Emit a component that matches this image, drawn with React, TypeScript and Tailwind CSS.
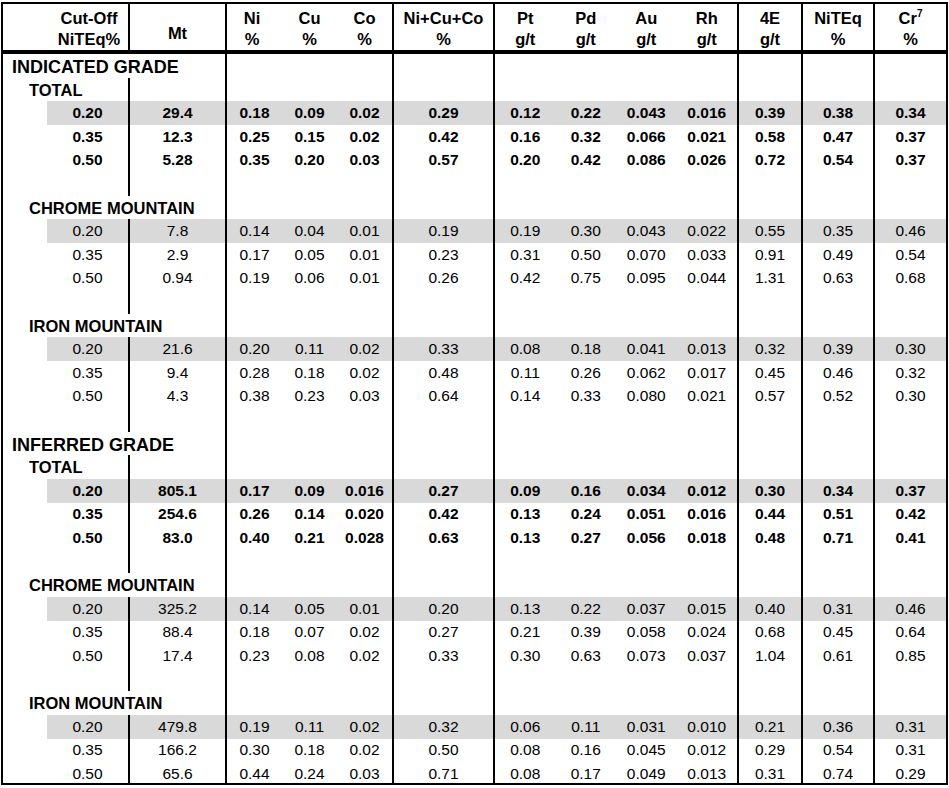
import React from "react";

const GRID =
  "grid grid-cols-[44px_81px_97px_57px_55px_55px_101px_62.5px_60.5px_60.5px_60.5px_64px_72px_73px]";

// columns (by index) that carry a vertical rule on their left edge
const RULED = new Set([2, 3, 6, 7, 11, 12, 13]);

type Row =
  | { kind: "major"; label: string }
  | { kind: "sub"; label: string; keepRule?: boolean }
  | { kind: "data"; values: string[]; bold?: boolean; shade?: boolean }
  | { kind: "blank" };

const block = (rows: string[][], bold: boolean): Row[] =>
  rows.map((r, i) => ({ kind: "data", values: r, bold, shade: i === 0 }));

const ROWS: Row[] = [
  { kind: "major", label: "INDICATED GRADE" },
  { kind: "sub", label: "TOTAL", keepRule: true },
  ...block(
    [
      ["0.20", "29.4", "0.18", "0.09", "0.02", "0.29", "0.12", "0.22", "0.043", "0.016", "0.39", "0.38", "0.34"],
      ["0.35", "12.3", "0.25", "0.15", "0.02", "0.42", "0.16", "0.32", "0.066", "0.021", "0.58", "0.47", "0.37"],
      ["0.50", "5.28", "0.35", "0.20", "0.03", "0.57", "0.20", "0.42", "0.086", "0.026", "0.72", "0.54", "0.37"],
    ],
    true,
  ),
  { kind: "blank" },
  { kind: "sub", label: "CHROME MOUNTAIN" },
  ...block(
    [
      ["0.20", "7.8", "0.14", "0.04", "0.01", "0.19", "0.19", "0.30", "0.043", "0.022", "0.55", "0.35", "0.46"],
      ["0.35", "2.9", "0.17", "0.05", "0.01", "0.23", "0.31", "0.50", "0.070", "0.033", "0.91", "0.49", "0.54"],
      ["0.50", "0.94", "0.19", "0.06", "0.01", "0.26", "0.42", "0.75", "0.095", "0.044", "1.31", "0.63", "0.68"],
    ],
    false,
  ),
  { kind: "blank" },
  { kind: "sub", label: "IRON MOUNTAIN" },
  ...block(
    [
      ["0.20", "21.6", "0.20", "0.11", "0.02", "0.33", "0.08", "0.18", "0.041", "0.013", "0.32", "0.39", "0.30"],
      ["0.35", "9.4", "0.28", "0.18", "0.02", "0.48", "0.11", "0.26", "0.062", "0.017", "0.45", "0.46", "0.32"],
      ["0.50", "4.3", "0.38", "0.23", "0.03", "0.64", "0.14", "0.33", "0.080", "0.021", "0.57", "0.52", "0.30"],
    ],
    false,
  ),
  { kind: "blank" },
  { kind: "major", label: "INFERRED GRADE" },
  { kind: "sub", label: "TOTAL", keepRule: true },
  ...block(
    [
      ["0.20", "805.1", "0.17", "0.09", "0.016", "0.27", "0.09", "0.16", "0.034", "0.012", "0.30", "0.34", "0.37"],
      ["0.35", "254.6", "0.26", "0.14", "0.020", "0.42", "0.13", "0.24", "0.051", "0.016", "0.44", "0.51", "0.42"],
      ["0.50", "83.0", "0.40", "0.21", "0.028", "0.63", "0.13", "0.27", "0.056", "0.018", "0.48", "0.71", "0.41"],
    ],
    true,
  ),
  { kind: "blank" },
  { kind: "sub", label: "CHROME MOUNTAIN" },
  ...block(
    [
      ["0.20", "325.2", "0.14", "0.05", "0.01", "0.20", "0.13", "0.22", "0.037", "0.015", "0.40", "0.31", "0.46"],
      ["0.35", "88.4", "0.18", "0.07", "0.02", "0.27", "0.21", "0.39", "0.058", "0.024", "0.68", "0.45", "0.64"],
      ["0.50", "17.4", "0.23", "0.08", "0.02", "0.33", "0.30", "0.63", "0.073", "0.037", "1.04", "0.61", "0.85"],
    ],
    false,
  ),
  { kind: "blank" },
  { kind: "sub", label: "IRON MOUNTAIN" },
  ...block(
    [
      ["0.20", "479.8", "0.19", "0.11", "0.02", "0.32", "0.06", "0.11", "0.031", "0.010", "0.21", "0.36", "0.31"],
      ["0.35", "166.2", "0.30", "0.18", "0.02", "0.50", "0.08", "0.16", "0.045", "0.012", "0.29", "0.54", "0.31"],
      ["0.50", "65.6", "0.44", "0.24", "0.03", "0.71", "0.08", "0.17", "0.049", "0.013", "0.31", "0.74", "0.29"],
    ],
    false,
  ),
];

function ruled(col: number) {
  return RULED.has(col) ? "border-l-2 border-black" : "";
}

// empty cells for columns [from..13]
function Empties({ from }: { from: number }) {
  const cells = [];
  for (let c = from; c <= 13; c++) cells.push(<div key={c} className={ruled(c)} />);
  return <>{cells}</>;
}

function BodyRow({ row, last }: { row: Row; last: boolean }) {
  const h = last ? "h-[21px]" : "h-[23.6px]";
  if (row.kind === "major") {
    return (
      <div className={`${GRID} ${h}`}>
        <div className="col-span-3 flex items-center whitespace-nowrap pl-[9px] text-[18px] font-bold">{row.label}</div>
        <Empties from={3} />
      </div>
    );
  }
  if (row.kind === "sub") {
    return (
      <div className={`${GRID} ${h}`}>
        <div className={`${row.keepRule ? "col-span-2" : "col-span-3"} flex items-center whitespace-nowrap pl-[26px] text-[16.5px] font-bold`}>
          {row.label}
        </div>
        <Empties from={row.keepRule ? 2 : 3} />
      </div>
    );
  }
  if (row.kind === "blank") {
    return (
      <div className={`${GRID} ${h}`}>
        <div />
        <Empties from={1} />
      </div>
    );
  }
  return (
    <div className={`${GRID} ${h} text-[15.5px] ${row.bold ? "font-bold" : ""}`}>
      <div />
      {row.values.map((v, i) => (
        <div key={i} className={`${ruled(i + 1)} ${row.shade ? "bg-[#d9d9d9]" : ""} flex items-center justify-center pb-[1px]`}>
          {v}
        </div>
      ))}
    </div>
  );
}

function Head({ top, bottom, className = "" }: { top: React.ReactNode; bottom: string; className?: string }) {
  return (
    <div className={`flex flex-col items-center justify-end leading-[21px] ${className}`}>
      <span>{top}</span>
      <span>{bottom}</span>
    </div>
  );
}

export default function App() {
  return (
    <div className="bg-white pl-[1px] pt-[2px] text-black [font-family:'Liberation_Sans',Arial,sans-serif]">
      <div className="w-[947px] border-2 border-black">
        <div className={`${GRID} h-[50px] border-b-4 border-black text-[16.5px] font-bold`}>
          <Head top="Cut-Off" bottom="NiTEq%" className="col-span-2 pl-[47px]" />
          <div className="flex items-end justify-center border-l-2 border-black pb-[6px] leading-[21px]">Mt</div>
          <Head top="Ni" bottom="%" className="border-l-2 border-black pr-[5px]" />
          <Head top="Cu" bottom="%" />
          <Head top="Co" bottom="%" />
          <Head top="Ni+Cu+Co" bottom="%" className="border-l-2 border-black" />
          <Head top="Pt" bottom="g/t" className="border-l-2 border-black" />
          <Head top="Pd" bottom="g/t" />
          <Head top="Au" bottom="g/t" />
          <Head top="Rh" bottom="g/t" />
          <Head top="4E" bottom="g/t" className="border-l-2 border-black" />
          <Head top="NiTEq" bottom="%" className="border-l-2 border-black" />
          <Head
            top={
              <>
                Cr<sup className="relative -top-[7px] text-[10px]">7</sup>
              </>
            }
            bottom="%"
            className="border-l-2 border-black"
          />
        </div>
        {ROWS.map((r, i) => (
          <BodyRow key={i} row={r} last={i === ROWS.length - 1} />
        ))}
      </div>
    </div>
  );
}
